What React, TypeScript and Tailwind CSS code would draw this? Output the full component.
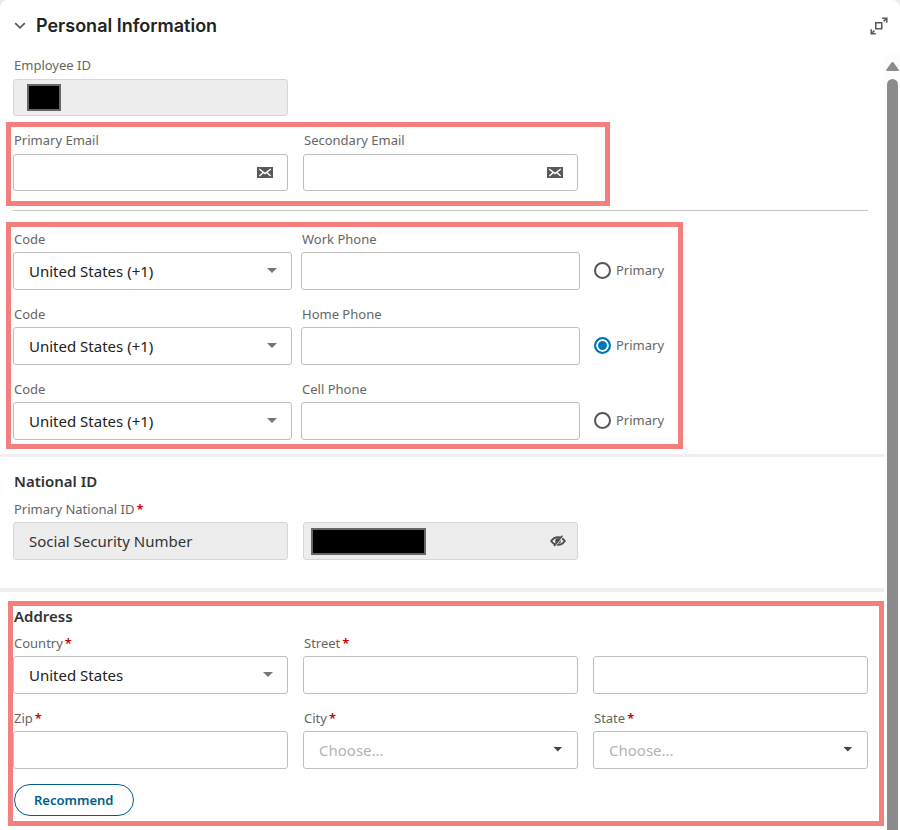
import { useId, useState } from "react";
import type { ReactNode } from "react";
import clsx from "clsx";

const PHONES = ["Work Phone", "Home Phone", "Cell Phone"];

const BOX = "relative flex items-center w-full rounded-[3px] border";
const ENABLED = "border-[#bfbfbf] bg-white";
const READ_ONLY = "border-[#d6d6d6] bg-[#ededed]";
const CONTROL =
  "h-full w-full min-w-0 appearance-none rounded-[3px] bg-transparent px-[15px] text-[15px] outline-none focus-visible:ring-1 focus-visible:ring-[#0076b6]";
const HEADING = "pl-px text-[15px] leading-5 font-semibold text-[#333]";

function ChevronIcon() {
  return (
    <svg width="12" height="8" viewBox="0 0 12 8" fill="none" stroke="#4d5a63" strokeWidth="1.7">
      <path d="M1.2 1.2 6 5.8 10.8 1.2" />
    </svg>
  );
}

function ExpandIcon() {
  return (
    <svg width="18" height="18" viewBox="0 0 18 18" fill="none" stroke="#5a5a5a" strokeWidth="1.5">
      <rect x="5.75" y="5.75" width="6" height="6" />
      <path d="M12.2 1.2h4.6v4.6M16.8 1.2l-3.2 3.2M1.2 12.2v4.6h4.6M1.2 16.8l3.2-3.2" />
    </svg>
  );
}

function MailIcon() {
  return (
    <svg width="16" height="11" viewBox="0 0 16 11" className="absolute right-[14px]">
      <rect width="16" height="11" fill="#58595b" />
      <path
        d="M2.2 2 8 6.6 13.8 2M2.4 9l3.8-3.6M13.6 9 9.8 5.4"
        fill="none"
        stroke="#fff"
        strokeWidth="1.4"
      />
    </svg>
  );
}

function EyeOffIcon() {
  return (
    <svg width="16" height="12" viewBox="0 0 16 12" fill="none" stroke="#4d4d4d">
      <path d="M1.2 6C3 3.200 5.200 2.200 8 2.200S13 3.200 14.800 6C13 8.800 10.800 9.800 8 9.800S3 8.800 1.200 6Z" strokeWidth="1.900" />
      <circle cx="8" cy="6" r="2.800" fill="#4d4d4d" stroke="none" />
      <path d="M5.200 11.500 13.400 1.200" stroke="#ededed" strokeWidth="1" />
      <path d="M4 11 12.400.6" strokeWidth="1.500" />
    </svg>
  );
}

interface FieldProps {
  label?: string;
  required?: boolean;
  readOnly?: boolean;
  compact?: boolean;
  children: (id: string) => ReactNode;
}

function Field({ label, required, readOnly, compact, children }: FieldProps) {
  const id = useId();
  return (
    <div className={clsx("flex flex-col justify-end", compact ? "gap-1" : "gap-[3px]")}>
      {label && (
        <label htmlFor={id} className="pl-px text-[13px] leading-5 text-[#666]">
          {label}
          {required && <span className="ml-[2px] font-semibold text-[#c80000]">*</span>}
        </label>
      )}
      <div className={clsx(BOX, readOnly ? READ_ONLY : ENABLED, compact ? "h-[37px]" : "h-[38px]")}>
        {children(id)}
      </div>
    </div>
  );
}

interface SelectProps {
  id: string;
  options: string[];
  placeholder?: boolean;
}

function Select({ id, options, placeholder }: SelectProps) {
  return (
    <>
      <select id={id} className={clsx(CONTROL, placeholder ? "text-[#b3b3b3]" : "text-[#222]")}>
        {options.map((option) => (
          <option key={option}>{option}</option>
        ))}
      </select>
      <svg
        width="10"
        height="5"
        viewBox="0 0 10 5"
        className={clsx(
          "pointer-events-none absolute right-[14px] mb-px",
          placeholder ? "fill-[#444]" : "fill-[#757575]",
        )}
      >
        <path d={placeholder ? "M.5 0h8.600L4.800 4.400Z" : "M0 0h10L5 5Z"} />
      </svg>
    </>
  );
}

function EmailField({ label }: { label: string }) {
  return (
    <Field label={label} compact>
      {(id) => (
        <>
          <input id={id} type="email" className={CONTROL} />
          <MailIcon />
        </>
      )}
    </Field>
  );
}

export default function App() {
  const [primary, setPrimary] = useState("Home Phone");
  const [open, setOpen] = useState(true);

  return (
    <main className="min-h-screen bg-[#ebebeb] font-['Noto_Sans',sans-serif]">
      <div className="flex min-h-screen flex-col rounded-t-lg bg-white">
        <header className="flex h-[55px] items-center justify-between pr-3 pb-1 pl-[14px]">
          <div className="flex items-center gap-[10px]">
            <button type="button" aria-label="Toggle section" aria-expanded={open} onClick={() => setOpen(!open)}>
              <ChevronIcon />
            </button>
            <h1 className="font-['Inter',sans-serif] text-lg leading-6 font-semibold text-[#222]">
              Personal Information
            </h1>
          </div>
          <button type="button" aria-label="Expand">
            <ExpandIcon />
          </button>
        </header>

        <div className="flex grow">
          {open && (
            <form className="min-w-0 grow pr-4 pb-1 pl-[13px]">
              <div className="grid grid-cols-3 gap-[15px]">
                <Field label="Employee ID" readOnly compact>
                  {(id) => (
                    <>
                      <span className="ml-[13px] h-[27px] w-[34px] shrink-0 border-2 border-[#666] bg-black" />
                      <input id={id} readOnly className={CONTROL} />
                    </>
                  )}
                </Field>
              </div>

              {/* Emails */}
              <section className="mt-[6px] -ml-[7px] w-[calc(66.6667%+34px)] border-[5px] border-[#f37f7f] pt-[3px] pr-[27px] pb-[10px] pl-[2px]">
                <div className="grid grid-cols-2 gap-[15px]">
                  <EmailField label="Primary Email" />
                  <EmailField label="Secondary Email" />
                </div>
              </section>

              <hr className="mt-1 border-[#c6c6c6]" />

              {/* Phones */}
              <section className="mt-[11px] -ml-[7px] flex w-[calc(80%-7px)] flex-col gap-[14px] border-[5px] border-[#f37f7f] pt-[2px] pr-[9px] pb-1 pl-[2px]">
                {PHONES.map((phone) => (
                  <div key={phone} className="grid grid-cols-[1fr_1fr_80px] gap-[9px]">
                    <Field label="Code">{(id) => <Select id={id} options={["United States (+1)"]} />}</Field>
                    <Field label={phone}>{(id) => <input id={id} type="tel" className={CONTROL} />}</Field>
                    <label className="flex h-[38px] items-center gap-[5px] self-end pl-[5px] text-[13px] text-[#666]">
                      <input
                        type="radio"
                        name="primary-phone"
                        checked={primary === phone}
                        onChange={() => setPrimary(phone)}
                        className="mb-px size-[17px] shrink-0 appearance-none rounded-full border-2 border-[#555] checked:border-[#0076b6] checked:bg-[#0076b6] checked:shadow-[inset_0_0_0_2px_#fff]"
                      />
                      Primary
                    </label>
                  </div>
                ))}
              </section>

              <hr className="mt-[5px] -mr-4 -ml-[13px] border-t-[3px] border-[#efefef]" />

              {/* National ID */}
              <section>
                <h2 className={clsx(HEADING, "mt-[14px]")}>National ID</h2>
                <div className="mt-2 grid grid-cols-3 gap-[15px]">
                  <Field label="Primary National ID" required readOnly>
                    {(id) => (
                      <input
                        id={id}
                        readOnly
                        defaultValue="Social Security Number"
                        className={clsx(CONTROL, "text-[#333]")}
                      />
                    )}
                  </Field>
                  <Field readOnly>
                    {(id) => (
                      <>
                        <span className="ml-[7px] h-[27px] w-[115px] shrink-0 border-2 border-[#666] bg-black" />
                        <input id={id} readOnly aria-label="National ID number" className={CONTROL} />
                        <button type="button" aria-label="Show number" className="mr-[11px] shrink-0">
                          <EyeOffIcon />
                        </button>
                      </>
                    )}
                  </Field>
                </div>
              </section>

              <hr className="mt-7 -mr-4 -ml-[13px] border-t-4 border-[#efefef]" />

              {/* Address */}
              <section className="mt-[9px] -mr-4 -ml-[5px] border-[5px] border-[#f37f7f] pr-[11px] pb-[5px]">
                <h2 className={HEADING}>Address</h2>
                <div className="mt-[7px] grid grid-cols-3 gap-x-[15px] gap-y-[14px]">
                  <Field label="Country" required>
                    {(id) => <Select id={id} options={["United States"]} />}
                  </Field>
                  <Field label="Street" required>
                    {(id) => <input id={id} className={CONTROL} />}
                  </Field>
                  <Field>{(id) => <input id={id} aria-label="Street line 2" className={CONTROL} />}</Field>
                  <Field label="Zip" required>
                    {(id) => <input id={id} className={CONTROL} />}
                  </Field>
                  <Field label="City" required>
                    {(id) => <Select id={id} options={["Choose..."]} placeholder />}
                  </Field>
                  <Field label="State" required>
                    {(id) => <Select id={id} options={["Choose..."]} placeholder />}
                  </Field>
                </div>
                <button
                  type="button"
                  className="mt-[15px] ml-px block h-8 rounded-full border border-[#005e8a] bg-white px-[19px] text-[13px] leading-5 font-semibold text-[#005e8a]"
                >
                  Recommend
                </button>
              </section>
            </form>
          )}

          {/* Scrollbar */}
          <div className="ml-auto flex w-4 shrink-0 flex-col items-center gap-2 bg-[#fcfcfc] pt-[7px]">
            <svg width="13" height="9" viewBox="0 0 13 9" fill="#8b8b8b">
              <path d="M6.500 0c.5 0 .9.300 1.200.7l4.900 6.700c.6.900.2 1.600-.8 1.600H1.200C.2 9-.2 8.300.4 7.400L5.300.7C5.600.3 6 0 6.500 0Z" />
            </svg>
            <div className="w-[11px] grow rounded-t-full bg-[#8b8b8b]" />
          </div>
        </div>
      </div>
    </main>
  );
}
